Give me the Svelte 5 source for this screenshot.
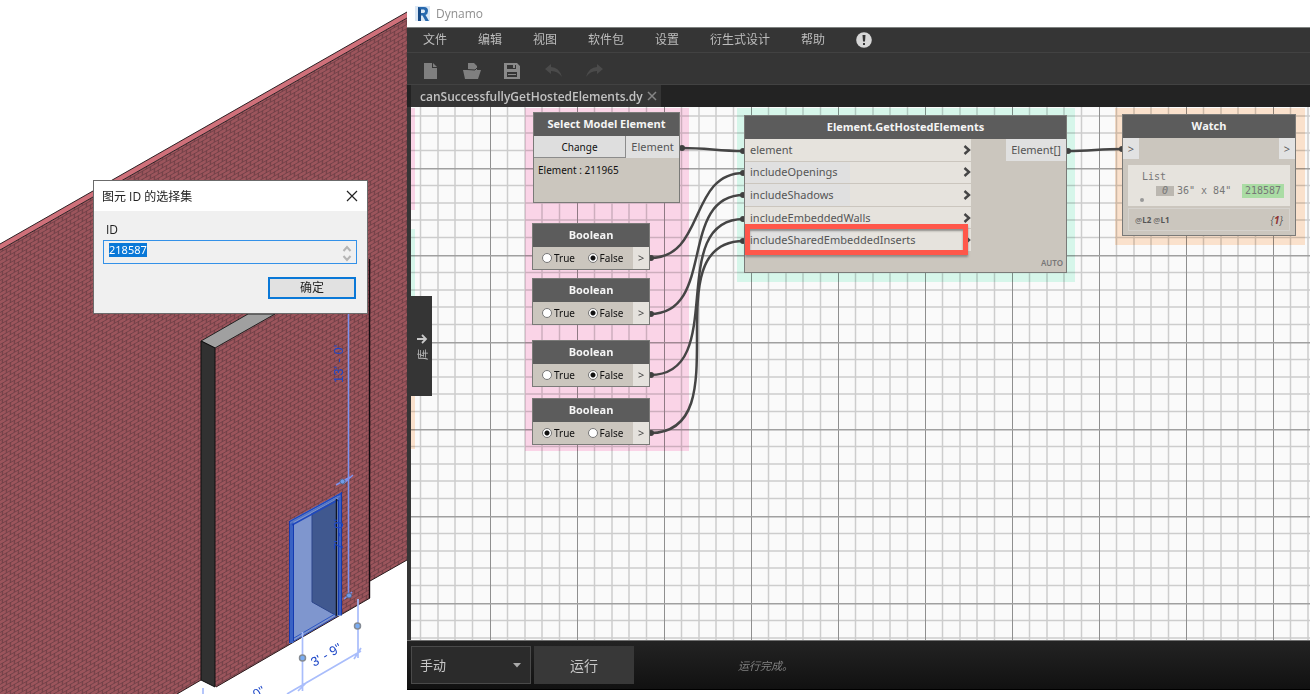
<script lang="ts">
    import { onMount } from 'svelte';

    interface BoolNode {
        x: number;
        y: number;
        value: boolean;
    }

    const menuItems = ['文件', '编辑', '视图', '软件包', '设置', '衍生式设计', '帮助'];

    const inputs = [
        'element',
        'includeOpenings',
        'includeShadows',
        'includeEmbeddedWalls',
        'includeSharedEmbeddedInserts'
    ];

    // Canvas coordinates
    const groups = [
        { x: 0, y: 1, w: 4, h: 102, kind: 'pink' },
        { x: 0, y: 122, w: 4, h: 69, kind: 'mint' },
        { x: 0, y: 280, w: 4, h: 62, kind: 'orange' },
        { x: 114, y: 1, w: 164, h: 343, kind: 'pink' },
        { x: 326, y: 1, w: 338, h: 174, kind: 'mint' },
        { x: 704, y: 1, w: 190, h: 137, kind: 'orange' }
    ];

    let booleans: BoolNode[] = [
        { x: 121, y: 116, value: false },
        { x: 121, y: 171, value: false },
        { x: 121, y: 233, value: false },
        { x: 121, y: 291, value: true }
    ];

    const wires = [
        [270, 41, 333, 44],
        [239, 151, 333, 66],
        [239, 207, 333, 88],
        [239, 268, 333, 112],
        [239, 326, 333, 134],
        [656, 44, 712, 42]
    ];

    let elementId = '218587';
    let runMode = 'manual';
    let idInput: HTMLInputElement;

    function wirePath([x1, y1, x2, y2]: number[]) {
        const k = Math.hypot(x2 - x1, y2 - y1) * 0.44;
        return `M${x1} ${y1}C${x1 + k} ${y1} ${x2 - k} ${y2} ${x2} ${y2}`;
    }

    onMount(() => {
        idInput.focus();
        idInput.select();
    });
</script>

<div class="desktop">
    <section class="model-view">
        <svg class="model" viewBox="0 0 407 694" preserveAspectRatio="xMinYMin slice">
            <defs>
                <pattern id="brick" width="8" height="8" patternUnits="userSpaceOnUse" patternTransform="skewY(-29.7)">
                    <rect width="8" height="8" fill="#9c555c" />
                    <path d="M0 .5H8M0 4.500H8" stroke="#74424a" />
                    <path d="M2.500 .5V4.500M6.500 4.500V8" stroke="#64393f" />
                </pattern>
            </defs>
            <path d="M0 250L407 18V560L370 581V598L216 687L201 680L177 694H0Z" fill="url(#brick)" />
            <path d="M0 244L407 12V18L0 250Z" fill="#cf707a" />
            <path d="M0 244L407 12M0 250L407 18" stroke="#2d2024" fill="none" />
            <path d="M407 560L370 581M370 598L216 687M201 680L177 694" stroke="#2a1a1c" fill="none" />
            <path d="M369.5 259V598" stroke="#160b10" stroke-width="1.4" />
            <path d="M201 341L248 314L275 314L215 348Z" fill="#a0a0a0" stroke="#222" />
            <path d="M201 341L215 348V687L201 680Z" fill="#313131" stroke="#111" />

            <!-- door -->
            <path d="M289 521L342 492V616L336 616L289 644Z" fill="#7f96ce" />
            <path d="M312 513L337 499V616L312 602Z" fill="#40588f" />
            <path d="M312 513V602L337 616" stroke="#2c458a" fill="none" />
            <path d="M291.500 522V643M340 494V615" stroke="#3a62c4" stroke-width="4" />
            <path d="M289 522L342 493M292 525L338 500" stroke="#1e48bf" stroke-width="1.500" />
            <path d="M289 523.500L340 496" stroke="#5777c4" stroke-width="1.500" />
            <path d="M289.500 521V643M293.500 524V641M338.500 500V615M341.500 492V615" stroke="#153ab0" />
            <path d="M336.500 499V616" stroke="#101522" stroke-width="1.500" />
            <path d="M294 641L337 616M294 638L335 614" stroke="#2b55c4" fill="none" />

            <!-- dimensions -->
            <g stroke="#7b92ed" fill="none">
                <path d="M348.500 314V596M343 484L353 475M344 599L352 592M336 485L350 477" stroke-width="1.500" />
                <path d="M302.500 632V691M358 599V658M203 688V694M287 694L361 651M298 691L307 682M354 659L361 648" stroke="#a9bdfb" stroke-width="1.700" />
            </g>
            <g fill="#6f9ce8" stroke="#53678d">
                <circle cx="342.500" cy="481.500" r="2.500" />
                <circle cx="349" cy="595.500" r="2.500" />
                <circle cx="302.500" cy="658" r="3" fill="#79adf4" stroke="#858b94" stroke-width="1.500" />
                <circle cx="357.500" cy="626" r="3" fill="#79adf4" stroke="#858b94" stroke-width="1.500" />
            </g>
            <g class="dimension">
                <text transform="translate(343 383) rotate(-90)">13' - 0'</text>
                <text transform="translate(343 550) rotate(-90)">7' - 0'</text>
                <text transform="translate(314 667) rotate(-30)">3' - 9"</text>
                <text transform="translate(256 699) rotate(-30)">0"</text>
            </g>
        </svg>

        <form class="dialog" on:submit|preventDefault>
            <div class="dialog-title">
                <span>图元 ID 的选择集</span>
                <button type="button" class="dialog-close" aria-label="关闭">
                    <svg width="12" height="12" viewBox="0 0 12 12"><path d="M1 1L11 11M11 1L1 11" stroke="#222" stroke-width="1.200" /></svg>
                </button>
            </div>
            <div class="dialog-body">
                <label for="element-id">ID</label>
                <div class="id-field">
                    <input id="element-id" type="text" bind:this={idInput} bind:value={elementId} />
                    <svg width="10" height="20" viewBox="0 0 10 20" fill="none" stroke="#b5b5b5" stroke-width="2"><path d="M1.500 9L5 5L8.500 9M1.500 14L5 18L8.500 14" /></svg>
                </div>
                <button type="submit" class="ok">确定</button>
            </div>
        </form>
    </section>

    <section class="dynamo">
        <header class="titlebar">
            <svg width="16" height="16" viewBox="0 0 16 16">
                <rect width="15" height="15" fill="#dce8f5" />
                <path d="M3 1H9Q13 1 13 5Q13 8 10.500 9L14 15H10.500L7.500 9.500H6V15H3Z" fill="#2769ae" />
                <path d="M6 3.500H8.500Q10 3.500 10 5.200Q10 7 8.500 7H6Z" fill="#dce8f5" />
                <path d="M3 1L6 3.500V15H3Z" fill="#174a86" />
            </svg>
            <span>Dynamo</span>
        </header>

        <nav class="menu">
            {#each menuItems as item}
                <button>{item}</button>
            {/each}
            <button aria-label="通知">
                <svg width="16" height="16" viewBox="0 0 16 16"><circle cx="8" cy="8" r="7.800" fill="#d6d6d6" /><path d="M6.500 3H9.500L9 9.500H7ZM7 11H9V13H7Z" fill="#333" /></svg>
            </button>
        </nav>

        <div class="toolbar">
            <button aria-label="新建"><svg width="20" height="18" viewBox="0 0 20 18"><path d="M3 1H11V6H16V17H3Z" fill="#7f7f7f" /><path d="M12 1L16 5H12Z" fill="#7f7f7f" /></svg></button>
            <button aria-label="打开"><svg width="20" height="18" viewBox="0 0 20 18"><path d="M6 1H12L15 4V8H19L16 17H3L1 8H6Z" fill="#7f7f7f" /><path d="M5 7.500L13 8L15 6" stroke="#353535" fill="none" /></svg></button>
            <button aria-label="保存"><svg width="20" height="18" viewBox="0 0 20 18"><path fill-rule="evenodd" d="M1 1H14L17 4V17H1ZM4 3V7H13V3ZM4 10V15H14V10Z" fill="#8a8a8a" /><path d="M10 3H12V6H10ZM5 12H13V13H5Z" fill="#8a8a8a" /></svg></button>
            <button aria-label="撤消" disabled><svg width="20" height="18" viewBox="0 0 20 18"><path d="M1 7L7 2V5Q15 5 18 15Q14 9 7 9V12Z" fill="#4b4b4b" /></svg></button>
            <button aria-label="重做" disabled><svg width="20" height="18" viewBox="0 0 20 18"><path d="M18 7L12 2V5Q4 5 1 15Q5 9 12 9V12Z" fill="#4b4b4b" /></svg></button>
        </div>

        <div class="tabs">
            <div class="tab">
                <span>canSuccessfullyGetHostedElements.dy</span>
                <button aria-label="关闭选项卡"><svg width="10" height="10" viewBox="0 0 10 10"><path d="M1 1L9 9M9 1L1 9" stroke="#858585" stroke-width="1.500" /></svg></button>
            </div>
        </div>

        <main class="canvas">
            <svg class="layer">
                <defs>
                    <pattern id="grid" x="79" y="61" width="87" height="87" patternUnits="userSpaceOnUse">
                        <path d="M17.500 0V87M35 0V87M52 0V87M69.500 0V87M0 17.500H87M0 35H87M0 52H87M0 69.500H87" stroke="#cdcdcd" stroke-width="1.500" />
                        <path d="M.5 0V87" stroke="#8f8f8f" />
                        <path d="M0 .7H87" stroke="#a0a0a0" stroke-width="1.400" />
                    </pattern>
                </defs>
                <rect width="100%" height="100%" fill="#fafafa" />
                <rect width="100%" height="100%" fill="url(#grid)" />
            </svg>

            {#each groups as g}
                <div class="group {g.kind}" style="left: {g.x}px; top: {g.y}px; width: {g.w}px; height: {g.h}px"></div>
            {/each}

            <svg class="layer">
                {#each wires as w}
                    <path d={wirePath(w)} fill="none" stroke="#454545" stroke-width="2.500" />
                    <circle cx={w[0] + 1} cy={w[1]} r="3" fill="#404040" />
                    <circle cx={w[2] - 1} cy={w[3]} r="3" fill="#404040" />
                {/each}
            </svg>

            <article class="node select-node">
                <h2>Select Model Element</h2>
                <div class="select-row">
                    <button>Change</button>
                    <span class="port">Element</span>
                </div>
                <p>Element : 211965</p>
            </article>

            {#each booleans as node, i}
                <article class="node bool-node" style="left: {node.x}px; top: {node.y}px">
                    <h2>Boolean</h2>
                    <div class="bool-row">
                        <label><input type="radio" name="bool-{i}" value={true} bind:group={node.value} />True</label>
                        <label><input type="radio" name="bool-{i}" value={false} bind:group={node.value} />False</label>
                        <span class="out">&gt;</span>
                    </div>
                </article>
            {/each}

            <article class="node hosted-node">
                <h2>Element.GetHostedElements</h2>
                <div class="hosted-body">
                    <ul>
                        {#each inputs as input}
                            <li>
                                <span>{input}</span>
                                <svg width="8" height="10" viewBox="0 0 8 10"><path d="M1.500 1L6 5L1.500 9" fill="none" stroke="#454545" stroke-width="2.400" /></svg>
                            </li>
                        {/each}
                    </ul>
                    <span class="port">Element[]</span>
                </div>
                <div class="lacing">AUTO</div>
            </article>
            <div class="highlight"></div>

            <article class="node watch-node">
                <h2>Watch</h2>
                <div class="watch-ports"><span>&gt;</span><span>&gt;</span></div>
                <div class="watch-list">
                    <div>List</div>
                    <div class="watch-item">
                        <span class="index">0</span>
                        <span>36" x 84"</span>
                        <span class="element-id">218587</span>
                    </div>
                    <i class="dot"></i>
                </div>
                <div class="watch-foot">
                    <span>@<b>L2</b> @<b>L1</b></span>
                    <em>&#123;<b>1</b>&#125;</em>
                </div>
            </article>

            <button class="library">
                <svg width="12" height="12" viewBox="0 0 12 12"><path d="M1 6H10M6 2L10 6L6 10" fill="none" stroke="#c8c8c8" stroke-width="1.800" /></svg>
                <span>库</span>
            </button>
        </main>

        <footer class="runbar">
            <div class="mode">
                <select bind:value={runMode} aria-label="运行模式">
                    <option value="manual">手动</option>
                    <option value="auto">自动</option>
                </select>
                <svg width="8" height="5" viewBox="0 0 8 5"><path d="M0 0H8L4 4.500Z" fill="#aaa" /></svg>
            </div>
            <button>运行</button>
            <span class="status">运行完成。</span>
        </footer>
    </section>
</div>

<style>
    :global(body) {
        background: #fff;
        font-family: 'Open Sans', 'Noto Sans CJK SC', sans-serif;
    }

    .desktop {
        display: grid;
        grid-template-columns: 407fr 903fr;
        min-height: 100vh;
        overflow: hidden;
    }

    button,
    input,
    select {
        font-family: inherit;
        border: 0;
        padding: 0;
        margin: 0;
        background: none;
        color: inherit;
    }

    svg {
        display: block;
        flex: none;
    }

    /* model view */
    .model-view {
        position: relative;
        overflow: hidden;
    }

    .model {
        width: 100%;
        height: 100%;
        position: absolute;
    }

    .dimension {
        font: 13px 'Liberation Sans', sans-serif;
        fill: #1e48c8;
    }

    .dialog {
        position: absolute;
        left: 93px;
        top: 180px;
        width: 275px;
        box-sizing: border-box;
        border: 1px solid #6b6b6b;
        background: #f0f0f0;
        color: #222;
        font-size: 12px;
    }

    .dialog-title {
        display: flex;
        align-items: center;
        justify-content: space-between;
        height: 30px;
        padding: 0 9px 0 8px;
        background: #fff;
    }

    .dialog-body {
        display: flex;
        flex-direction: column;
        padding: 10px 10px 14px 9px;
    }

    .dialog-body label {
        padding-left: 3px;
        line-height: 18px;
    }

    .id-field {
        display: flex;
        align-items: center;
        height: 22px;
        margin-top: 1px;
        padding-right: 4px;
        border: 1px solid #3391e8;
    }

    .id-field input {
        flex: 1;
        min-width: 0;
        padding: 0 5px 4px;
        font: 11px/14px 'Noto Sans', sans-serif;
        outline: none;
    }

    .id-field input::selection {
        background: #0a78d7;
        color: #fff;
    }

    .ok {
        align-self: flex-end;
        width: 88px;
        height: 22px;
        margin: 13px 1px 0 0;
        border: 2px solid #0a78d7;
        background: #e1e1e1;
        font-size: 12px;
        line-height: 18px;
    }

    /* Dynamo window */
    .dynamo {
        display: flex;
        flex-direction: column;
        min-width: 0;
        margin-bottom: 4px;
        background: #353535;
        color: #bdbdbd;
    }

    .titlebar {
        display: flex;
        align-items: center;
        gap: 5px;
        height: 28px;
        padding: 0 8px;
        box-sizing: border-box;
        border-bottom: 1px solid #7e8280;
        background: #fff;
        color: #8f8f8f;
        font-size: 12px;
    }

    .menu {
        display: flex;
        align-items: center;
        gap: 31px;
        height: 24px;
        padding: 0 16px;
        border-bottom: 1px solid #424242;
    }

    .menu button {
        font-size: 12px;
        line-height: 18px;
    }

    .toolbar {
        display: flex;
        align-items: center;
        gap: 21px;
        height: 31px;
        padding: 4px 14px 0;
        box-sizing: border-box;
    }

    .tabs {
        height: 22px;
        padding-left: 4px;
        border-top: 1px solid #424242;
        background: #232323;
    }

    .tab {
        display: flex;
        align-items: center;
        gap: 2px;
        width: 250px;
        height: 22px;
        box-sizing: border-box;
        padding: 0 4px 0 9px;
        background: #353535;
        color: #c2c2c2;
        font-size: 12px;
        font-weight: 600;
    }

    .tab span {
        flex: 1;
        white-space: nowrap;
    }

    .canvas {
        position: relative;
        flex: 1;
        min-height: 533px;
        margin-left: 4px;
        overflow: hidden;
        color: #555;
        font-family: 'Noto Sans', sans-serif;
        font-size: 11px;
    }

    .layer {
        position: absolute;
        inset: 0;
        width: 100%;
        height: 100%;
    }

    .group {
        position: absolute;
        mix-blend-mode: multiply;
    }

    .pink {
        background: #ffd9ec;
    }

    .mint {
        background: #dbfbef;
    }

    .orange {
        background: #ffe6d0;
    }

    .node {
        position: absolute;
        display: flex;
        flex-direction: column;
        box-sizing: border-box;
        border: 1px solid #7a7a78;
        background: #cbc6be;
    }

    .node h2 {
        margin: 0;
        padding-bottom: 1px;
        background: #5c5c5c;
        color: #f5f5f5;
        font-family: 'Open Sans', sans-serif;
        font-size: 11px;
        line-height: 22px;
        text-align: center;
    }

    .port {
        background: #e0e0e0;
        line-height: 22px;
        text-align: center;
    }

    .select-node {
        left: 122px;
        top: 5px;
        width: 147px;
        height: 91px;
    }

    .select-row {
        display: flex;
    }

    .select-row button {
        width: 92px;
        border-right: 1px solid #8c8c8c;
        border-bottom: 1px solid #8c8c8c;
        background: #dedede;
        color: #111;
        font-size: 10px;
    }

    .select-row .port {
        flex: 1;
    }

    .select-node p {
        margin: 4px;
        color: #111;
        font-size: 10px;
        line-height: 16px;
    }

    .bool-node {
        width: 118px;
    }

    .bool-row {
        display: flex;
        align-items: center;
        height: 22px;
        padding-left: 9px;
        color: #111;
        font-size: 10px;
    }

    .bool-row label {
        display: flex;
        align-items: center;
        gap: 2px;
        width: 46px;
    }

    .bool-row input {
        appearance: none;
        flex: none;
        width: 10px;
        height: 10px;
        border: 1px solid #777;
        border-radius: 50%;
        background: #fff;
    }

    .bool-row input:checked {
        background: radial-gradient(circle, #111 0 2px, #fff 3px);
    }

    .out {
        width: 16px;
        margin-left: auto;
        background: #e5e2dd;
        color: #444;
        font-size: 11px;
        line-height: 22px;
        text-align: center;
    }

    .hosted-node {
        left: 333px;
        top: 8px;
        width: 323px;
        height: 158px;
    }

    .hosted-body {
        display: flex;
        justify-content: space-between;
        align-items: flex-start;
    }

    .hosted-node ul {
        display: flex;
        flex-direction: column;
        width: 226px;
        height: 113px;
        margin: 0;
        padding: 0;
        list-style: none;
    }

    .hosted-node li {
        flex: 1;
        display: flex;
        align-items: center;
        justify-content: space-between;
        padding-left: 5px;
        border-bottom: 1px solid #cbc6be;
        background: linear-gradient(90deg, #e0e0e0 105px, #e6e3dd 105px);
        line-height: 16px;
    }

    .hosted-node li:first-child,
    .hosted-node li:nth-child(4) {
        background: #e6e3dd;
    }

    .hosted-body .port {
        width: 60px;
    }

    .lacing {
        margin-top: auto;
        padding-right: 3px;
        color: #777;
        font-size: 8px;
        font-weight: 600;
        line-height: 18px;
        text-align: right;
    }

    .highlight {
        position: absolute;
        left: 334px;
        top: 117px;
        width: 223px;
        height: 31px;
        box-sizing: border-box;
        border: 5px solid #ff574a;
        box-shadow: 0 2px 2px #5558, inset 0 2px 2px #4448;
    }

    .watch-node {
        left: 711px;
        top: 7px;
        width: 174px;
        height: 122px;
        font-family: 'DejaVu Sans Mono', monospace;
    }

    .watch-ports {
        display: flex;
        justify-content: space-between;
        line-height: 21px;
        text-align: center;
        font-family: 'Open Sans', sans-serif;
    }

    .watch-ports span {
        width: 16px;
        background: #e2e2e2;
    }

    .watch-list {
        height: 41px;
        box-sizing: border-box;
        margin: 6px 5px 0;
        padding: 5px 6px 0 14px;
        background: #e6e3dd;
        color: #777;
        font-size: 10px;
        line-height: 14px;
    }

    .watch-item {
        display: flex;
        align-items: center;
        gap: 3px;
        padding-left: 14px;
    }

    .index {
        width: 18px;
        background: #bbb7b0;
        line-height: 10px;
        text-align: center;
        font-style: italic;
    }

    .watch-item .element-id {
        margin-left: auto;
        padding: 0 3px;
        background: #aadca4;
    }

    .dot {
        display: block;
        width: 4px;
        height: 4px;
        margin-left: -2px;
        border-radius: 50%;
        background: #999;
    }

    .watch-foot {
        display: flex;
        align-items: center;
        justify-content: space-between;
        height: 23px;
        margin: 2px 5px 0;
        padding: 0 6px;
        border: 1px solid #d5d2cd;
        box-sizing: border-box;
        font-family: 'Open Sans', sans-serif;
        font-size: 8px;
    }

    .watch-foot em {
        font-size: 10px;
    }

    .watch-foot em b {
        color: #8f3232;
    }

    .library {
        position: absolute;
        left: 0;
        top: 189px;
        display: flex;
        flex-direction: column;
        align-items: center;
        justify-content: center;
        gap: 4px;
        width: 21px;
        height: 100px;
        background: #353535;
        color: #bbb;
        font-family: 'Noto Sans CJK SC', sans-serif;
        font-size: 11px;
    }

    .library span {
        line-height: 14px;
        writing-mode: sideways-lr;
    }

    .runbar {
        display: flex;
        align-items: center;
        gap: 3px;
        height: 48px;
        padding-left: 4px;
        border-top: 1px solid #707070;
        border-bottom: 1px solid #000;
        background: linear-gradient(#232323, #111);
        font-size: 13px;
    }

    .mode {
        position: relative;
    }

    .mode select {
        appearance: none;
        width: 120px;
        height: 38px;
        padding-left: 8px;
        border: 1px solid #4a4a4a;
        background: #2b2b2b;
        color: #c8c8c8;
        font-size: 13px;
    }

    .mode svg {
        position: absolute;
        right: 10px;
        top: 17px;
        pointer-events: none;
    }

    .runbar button {
        width: 100px;
        height: 38px;
        background: #383838;
        color: #c8c8c8;
        font-size: 14px;
    }

    .status {
        margin-left: 101px;
        color: #808080;
        font-size: 11px;
        font-style: italic;
    }
</style>
